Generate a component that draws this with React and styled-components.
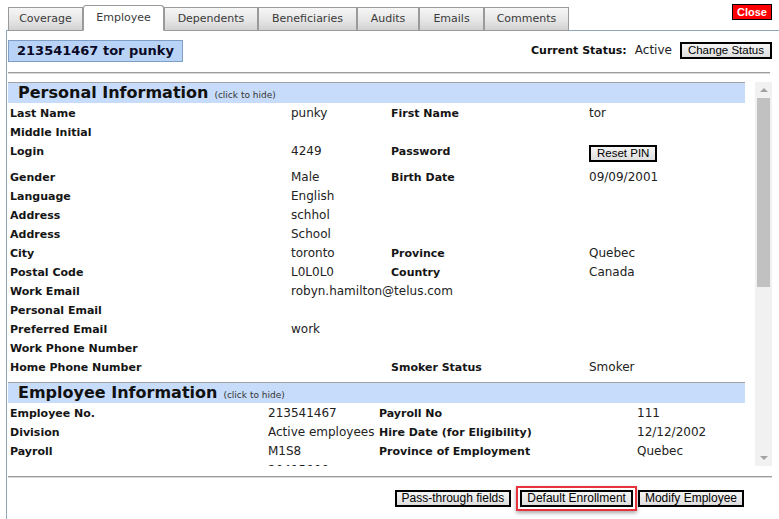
import React from 'react'
import styled, {createGlobalStyle} from 'styled-components'

const GlobalStyle = createGlobalStyle`
  html, body {
    margin: 0;
    padding: 0;
    background: #fff;
  }
  body {
    font-family: "DejaVu Sans", Verdana, sans-serif;
    color: #111;
  }
`

const tabs = [
    {name: 'Coverage', width: 75},
    {name: 'Employee', width: 81},
    {name: 'Dependents', width: 94},
    {name: 'Beneficiaries', width: 99},
    {name: 'Audits', width: 62},
    {name: 'Emails', width: 65},
    {name: 'Comments', width: 85},
]

const personal = [
    ['Last Name', 'punky', 'First Name', 'tor'],
    ['Middle Initial', '', '', ''],
    ['Login', '4249', 'Password', 'PIN'],
    ['Gender', 'Male', 'Birth Date', '09/09/2001'],
    ['Language', 'English', '', ''],
    ['Address', 'schhol', '', ''],
    ['Address', 'School', '', ''],
    ['City', 'toronto', 'Province', 'Quebec'],
    ['Postal Code', 'L0L0L0', 'Country', 'Canada'],
    ['Work Email', 'robyn.hamilton@telus.com', '', ''],
    ['Personal Email', '', '', ''],
    ['Preferred Email', 'work', '', ''],
    ['Work Phone Number', '', '', ''],
    ['Home Phone Number', '', 'Smoker Status', 'Smoker'],
]

const employee = [
    ['Employee No.', '213541467', 'Payroll No', '111'],
    ['Division', 'Active employees', 'Hire Date (for Eligibility)', '12/12/2002'],
    ['Payroll', 'M1S8', 'Province of Employment', 'Quebec'],
    ['', '20415000', '', '-'],
]

const Section = ({title, rows, cols}) => (
    <SectionWrap>
        <SectionBar>
            <SectionTitle>{title}</SectionTitle>
            <HideLink>(click to hide)</HideLink>
        </SectionBar>
        {rows.map((r, i) => (
            <Row key={i} cols={cols} tall={r[3] === 'PIN'}>
                <Label>{r[0]}</Label>
                <Value>{r[1]}</Value>
                <Label>{r[2]}</Label>
                {r[3] === 'PIN'
                    ? <Value><SmallButton>Reset PIN</SmallButton></Value>
                    : <Value>{r[3]}</Value>}
            </Row>
        ))}
    </SectionWrap>
)

const App = () => {
    return (
        <Page>
            <GlobalStyle/>
            <TopRow>
                <Tabs>
                    {tabs.map(t => (
                        <Tab key={t.name} width={t.width} active={t.name === 'Employee'}>{t.name}</Tab>
                    ))}
                </Tabs>
                <CloseButton>Close</CloseButton>
            </TopRow>
            <Panel>
                <Header>
                    <NameBox>213541467 tor punky</NameBox>
                    <Status>
                        <StatusLabel>Current Status:</StatusLabel>
                        <StatusValue>Active</StatusValue>
                        <SmallButton>Change Status</SmallButton>
                    </Status>
                </Header>
                <Rule/>
                <ScrollFrame>
                    <ScrollBody>
                        <Section title="Personal Information" rows={personal} cols="281px 100px 198px 1fr"/>
                        <Section title="Employee Information" rows={employee} cols="258px 111px 258px 1fr"/>
                    </ScrollBody>
                    <Scrollbar>
                        <ScrollArrow/>
                        <Thumb/>
                        <Spacer/>
                        <ScrollArrow down/>
                    </Scrollbar>
                </ScrollFrame>
                <BottomRule/>
                <Actions>
                    <ActionButton>Pass-through fields</ActionButton>
                    <Highlight>
                        <ActionButton>Default Enrollment</ActionButton>
                    </Highlight>
                    <ActionButton>Modify Employee</ActionButton>
                </Actions>
            </Panel>
        </Page>
    )
}

const Page = styled.div`
  width: 779px;
  height: 519px;
  overflow: hidden;
  display: flex;
  flex-direction: column;
`

const TopRow = styled.div`
  display: flex;
  justify-content: space-between;
  align-items: flex-start;
  padding: 0 7px 0 8px;
  height: 30px;
  position: relative;
  z-index: 1;
`

const Tabs = styled.div`
  display: flex;
  align-items: flex-end;
  height: 31px;
`

const Tab = styled.div`
  box-sizing: border-box;
  width: ${props => props.width}px;
  height: ${props => props.active ? '26px' : '24px'};
  border: 1px solid #9a9a9a;
  border-bottom-color: ${props => props.active ? '#fff' : '#9a9a9a'};
  border-radius: ${props => props.active ? '3px 3px 0 0' : '0'};
  background: ${props => props.active ? '#fff' : 'linear-gradient(#f6f6f6 0%, #e6e6e6 55%, #d2d2d2 100%)'};
  font-size: 11px;
  color: #3a3a3a;
  text-align: center;
  line-height: ${props => props.active ? '24px' : '21px'};
  white-space: nowrap;
`

const CloseButton = styled.div`
  margin-top: 4px;
  height: 16px;
  box-sizing: border-box;
  padding: 0 4px;
  border: 1px solid #000;
  background: #f00;
  color: #fff;
  font: bold 11px "Liberation Sans", Arial, sans-serif;
  line-height: 14px;
`

const Panel = styled.div`
  flex: 1;
  margin-left: 6px;
  border-left: 1px solid #8fa6b6;
  border-top: 1px solid #8fa6b6;
  padding: 0 7px 0 1px;
  display: flex;
  flex-direction: column;
`

const Header = styled.div`
  display: flex;
  justify-content: space-between;
  align-items: flex-start;
  padding-top: 9px;
`

const NameBox = styled.div`
  height: 22px;
  box-sizing: border-box;
  padding: 0 8px;
  border: 1px solid #7e9ec6;
  background: #b9d3f7;
  font-size: 13px;
  font-weight: bold;
  line-height: 20px;
  color: #0a0a26;
`

const Status = styled.div`
  display: flex;
  align-items: center;
  margin-top: 1px;
  height: 18px;
`

const StatusLabel = styled.span`
  font-size: 11px;
  font-weight: bold;
  color: #111;
`

const StatusValue = styled.span`
  font-size: 12px;
  color: #222;
  margin: 0 8px 0 8px;
`

const SmallButton = styled.button`
  height: 17px;
  box-sizing: border-box;
  padding: 0 6px;
  border: 2px solid #000;
  background: linear-gradient(#f5f5f5, #dedede);
  font: 11.5px "Liberation Sans", Arial, sans-serif;
  line-height: 13px;
  color: #000;
  margin: 0;
`

const Rule = styled.div`
  margin: 10px 2px 0 0;
  border-top: 1px solid #9c9c9c;
  border-bottom: 1px solid #dadada;
`

const ScrollFrame = styled.div`
  margin-top: 8px;
  height: 384px;
  display: flex;
`

const ScrollBody = styled.div`
  flex: 1;
  overflow: hidden;
  padding-right: 10px;
`

const Scrollbar = styled.div`
  width: 17px;
  background: #f1f1f1;
  display: flex;
  flex-direction: column;
`

const ScrollArrow = styled.div`
  height: 16px;
  display: flex;
  align-items: center;
  justify-content: center;

  &::after {
    content: '';
    width: 0;
    height: 0;
    border-style: solid;
    border-width: ${props => props.down ? '4px 4px 0 4px' : '0 4px 4px 4px'};
    border-color: ${props => props.down
            ? '#a3a3a3 transparent transparent transparent'
            : 'transparent transparent #a3a3a3 transparent'};
  }
`

const Thumb = styled.div`
  height: 189px;
  margin: 0 2px;
  background: #c1c1c1;
`

const Spacer = styled.div`
  flex: 1;
`

const SectionWrap = styled.div`
  & + & {
    margin-top: 6px;
  }
`

const SectionBar = styled.div`
  height: 21px;
  box-sizing: border-box;
  border-top: 1px solid #a3a3a3;
  background: #c7dcfa;
  padding-left: 10px;
  display: flex;
  align-items: baseline;
  line-height: 20px;
  white-space: nowrap;
`

const SectionTitle = styled.span`
  font-size: 16px;
  font-weight: bold;
  color: #111;
`

const HideLink = styled.span`
  font-size: 9px;
  color: #333;
  margin-left: 6px;
`

const Row = styled.div`
  display: grid;
  grid-template-columns: ${props => props.cols};
  grid-template-rows: 19px;
  height: ${props => props.tall ? '26px' : '19px'};
  padding-left: 2px;
  align-items: start;
  line-height: 21px;
  white-space: nowrap;
`

const Label = styled.div`
  font-size: 11px;
  font-weight: bold;
  color: #151515;
`

const Value = styled.div`
  font-size: 12px;
  color: #222;
  display: flex;

  & > button {
    margin-top: 4px;
  }
`

const BottomRule = styled.div`
  margin-top: 10px;
  border-top: 1px solid #9c9c9c;
  border-bottom: 1px solid #dadada;
`

const Actions = styled.div`
  display: flex;
  justify-content: flex-end;
  align-items: center;
  margin-top: 8px;
  padding-right: 28px;
`

const ActionButton = styled(SmallButton)`
  padding: 0 5px;
  font-size: 12px;
`

const Highlight = styled.div`
  margin: 0 1px 0 5px;
  padding: 2px;
  border: 2px solid #e8323c;
  box-shadow: 0 2px 4px rgba(0, 0, 0, 0.35);
  display: flex;
`

export default App
